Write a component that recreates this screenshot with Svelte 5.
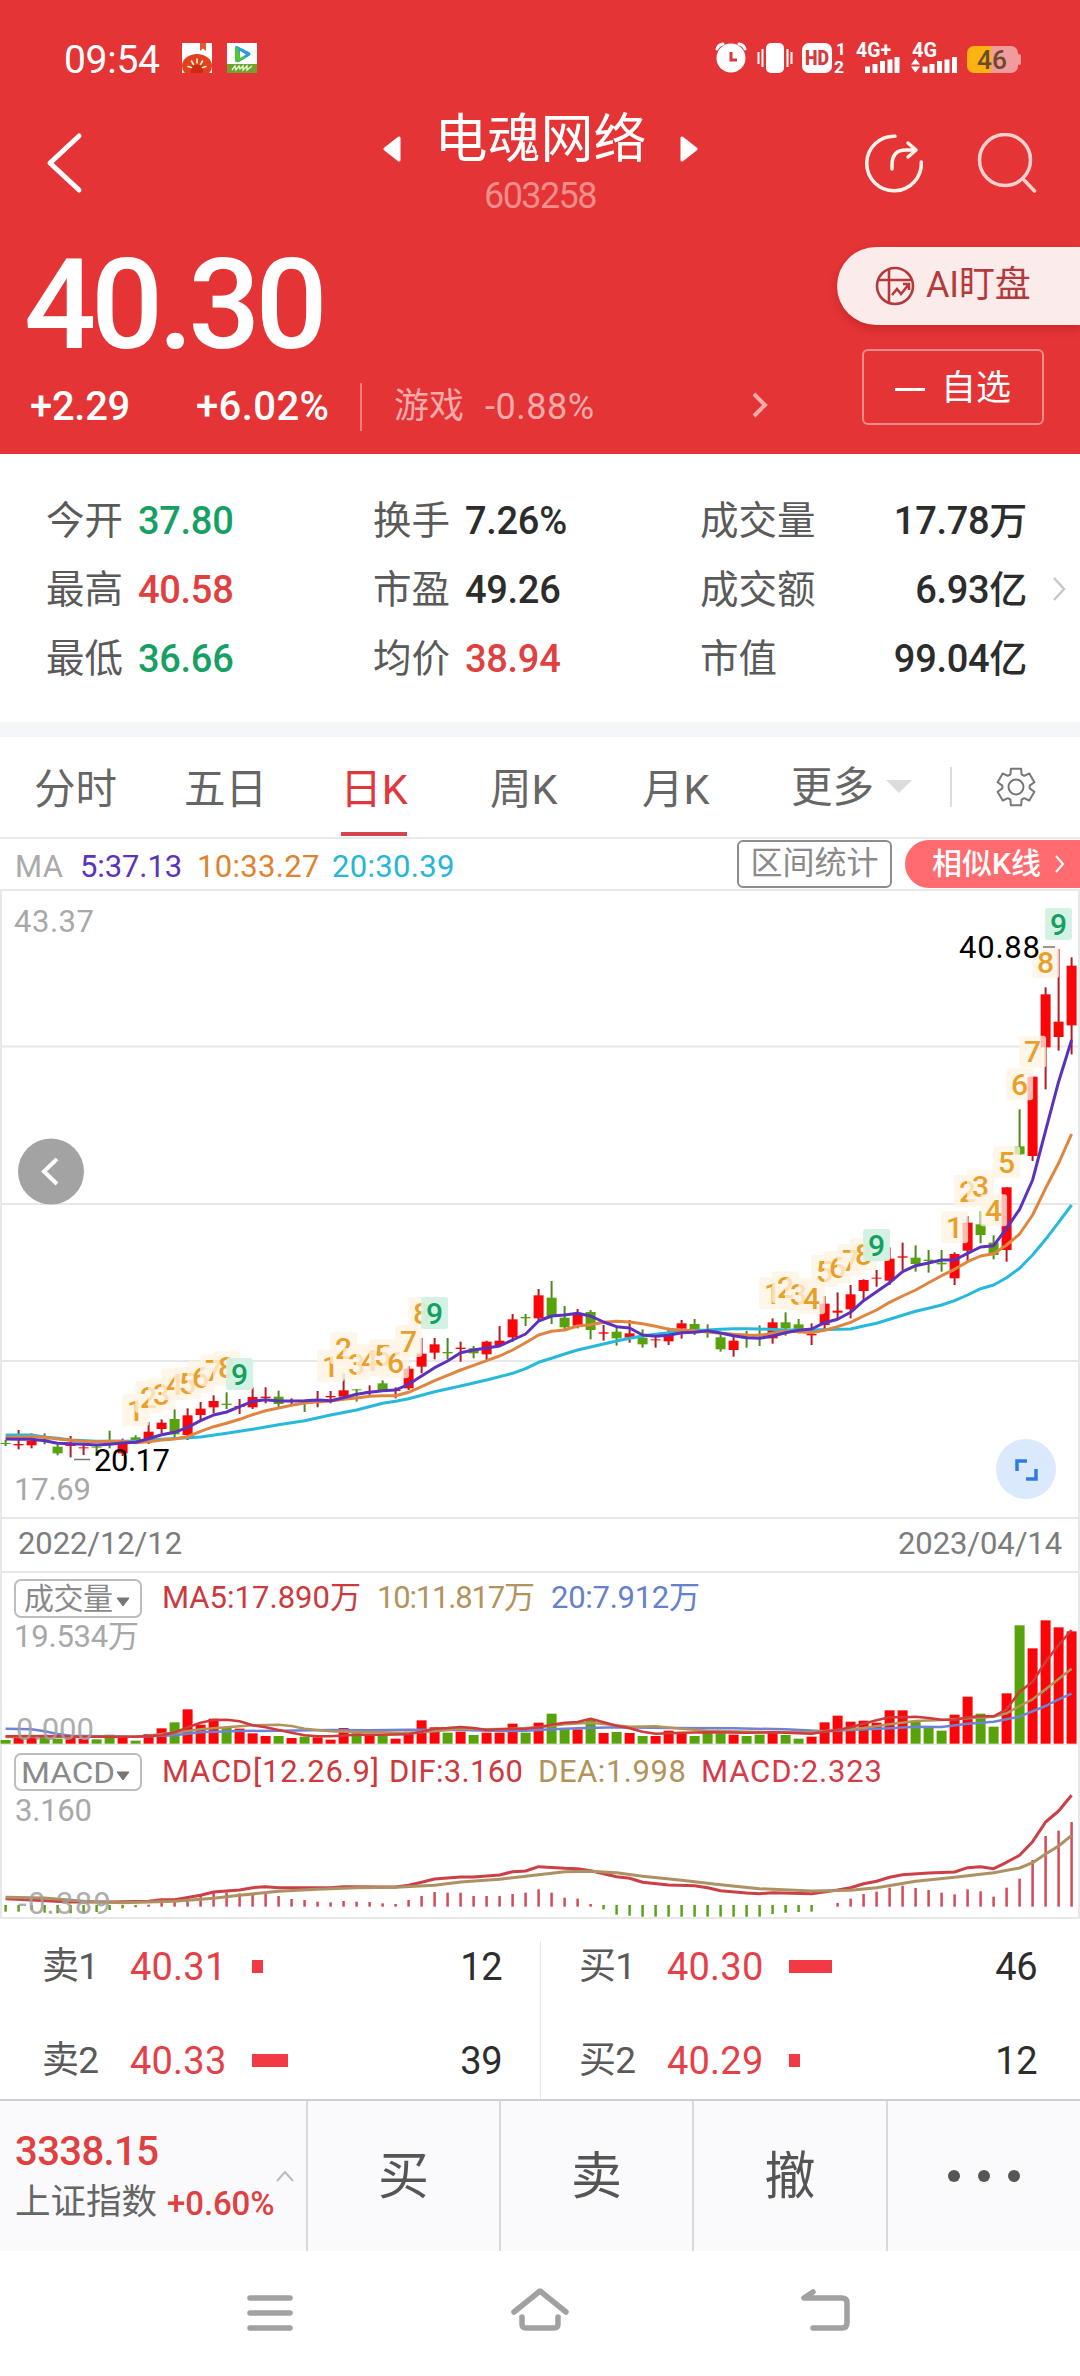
<script>
  const PITCH = 13;
  const FIRST_X = 5.6;
  const x = (i) => FIRST_X + PITCH * i;

  // Candle rows: [colour, high, body top, body bottom, low], in thirds of a pixel.
  const blocks = [
    { base: 933, rows: [
      ['g',720,729,732,738],['r',690,732,736,748],['r',700,722,736,745],['g',700,716,719,733],['g',733,740,760,766],
      ['r',708,734,738,772],['r',735,742,745,765],['g',738,740,742,760],['g',692,728,730,745],['r',716,730,760,768],
      ['g',706,712,724,730],['r',666,695,720,732],['r',658,668,687,700],['g',628,657,703,712],['r',625,646,705,720],
      ['r',606,626,645,665],['r',586,603,622,640],['g',577,611,615,627],['r',597,618,621,642],['r',562,591,622,627],
      ['r',562,590,594,610],['g',572,590,612,622],['r',595,603,605,618],['g',600,603,605,636],['r',573,600,602,622],
      ['r',573,588,592,610],['r',520,571,590,595],['g',567,568,571,605],['r',556,574,576,590],['g',541,550,570,575],
      ['r',562,570,572,595],['r',498,506,565,570],['r',414,461,500,520],['r',414,433,458,478],['g',414,456,460,478],
      ['r',425,443,447,485],['g',438,445,460,475],['r',422,425,463,480],['r',378,422,436,440],['r',342,358,412,425],
      ['g',342,351,355,378],['r',267,286,355,365]
    ]},
    { base: 633, rows: [
      ['g',543,593,648,672],['g',618,653,682,688],['r',627,640,677,685],['g',630,636,690,718],['r',675,697,701,722],
      ['g',680,695,715,737],['r',660,700,713,728],['g',688,713,733,743],['r',710,718,721,743],['r',683,705,724,735],
      ['r',660,670,686,716],['g',657,672,688,705],['g',673,692,695,713],['g',705,712,748,755],['r',710,722,750,770],
      ['g',693,712,714,743],['g',676,712,714,738],['r',655,667,715,731],['g',637,667,685,707],['g',657,673,687,700],
      ['r',670,702,706,735],['r',588,611,675,690]
    ]},
    { base: -27, rows: [
      ['r',1237,1292,1298,1315],['r',1215,1243,1288,1315],['r',1198,1200,1233,1260],['r',1170,1193,1196,1220],['r',1102,1136,1202,1215],
      ['r',1088,1129,1133,1170],['g',1096,1133,1152,1175],['g',1110,1139,1143,1178],['g',1110,1148,1153,1175],['r',1117,1122,1195,1215],
      ['r',1008,1028,1112,1143],['g',993,1033,1065,1090],['g',1066,1088,1125,1138],['r',922,922,1110,1145],['g',688,799,823,825],
      ['r',590,590,828,843],['r',322,343,502,628],['r',207,425,471,512],['r',232,257,436,523]
    ]}
  ];
  const candles = blocks
    .flatMap((b) => b.rows.map(([c, ...v]) => [c, ...v.map((n) => (n + b.base) / 3)]))
    .map(([c, high, top, bottom, low], i) => ({ c, high, top, bottom, low, x: x(i) }));

  const marks = [10, 25, 59, 73].flatMap((start) =>
    Array.from({ length: 9 }, (_, k) => ({ n: k + 1, x: x(start + k), y: candles[start + k].high - 25 }))
  );

  const seq = (start, base, values) => values.map((v, k) => [start + k, v + base]);
  const pairs = (base, flat) => {
    const out = [];
    for (let k = 0; k < flat.length; k += 2) out.push([flat[k], flat[k + 1] + base]);
    return out;
  };
  const line = (pts) => pts.map(([i, v]) => `${x(i).toFixed(1)},${(v / 3).toFixed(1)}`).join(' ');

  const ma5 = line([
    ...seq(0, 933, [717,718,718,722,730,731,733,735,733,729,727,716,704,697,682,662,645,636,620,604,599,603,603,602,600,602,593,583,577,572,570,553,528,503,483,458,450,444,438,420,402,363]),
    ...seq(42, 633, [648,645,640,648,666,680,684,705,709,706,698,697,692,699,707,713,715,708,698,691,687,668]),
    ...seq(64, -27, [1318,1297,1262,1235,1208,1175,1157,1149,1140,1140,1120,1101,1097,1045,988,900,752,605,480])
  ]);
  const ma10 = line([
    ...seq(0, 933, [712,712,710,712,717,721,724,725,724,724,728,725,720,717,710,694,680,670,658,644,632,624,616,609,605,603,598,594,589,587,587,577,560,542,526,510,496,482,468,450,428,405]),
    ...seq(42, 633, [694,690,678,674,667,664,666,671,679,688,690,692,696,700,703,705,706,700,693,695,698,691]),
    ...seq(64, -27, [1340,1327,1308,1290,1267,1248,1230,1208,1187,1168,1145,1128,1121,1095,1062,1005,925,850,762])
  ]);
  const ma20 = line([
    ...pairs(933, [0,705,2,705,3,711,4,715,5,720,7,724,10,724,12,718,14,713,15,711,17,700,19,688,21,674,23,662,25,645,27,630,29,610,30,604,31,596,33,575,35,558,37,540,39,520,40,506,41,487]),
    ...seq(42, 633, [775,762,750,741,732,723,715,708,703,698,694,691,690,688,686,686,687]),
    ...pairs(633, [60,690,62,690]),
    ...seq(64, -27, [1348,1347,1338,1330,1318,1306,1294,1285,1275,1262,1245,1226,1215,1193,1165,1125,1078,1027,975])
  ]);

  const volumeTops = [720,708,706,712,716,712,716,718,704,712,722,702,685,667,628,674,656,684,686,700,708,708,714,710,712,719,684,700,705,708,716,695,661,682,698,695,705,698,698,671,698,668,
    641,686,688,660,699,696,699,708,708,692,696,708,698,700,704,708,704,699,705,716,710,667,647,665,662,668,631,631,664,684,692,644,590,641,680,580,376,445,361,382,394];
  const volumes = volumeTops.map((t, i) => ({ x: x(i), y: (t - 213) / 3, h: (731 - t) / 3, c: candles[i].c }));
  const v5 = line(pairs(-213, [0,709,3,708,6,710,10,710,12,706,13,697,14,682,15,668,16,660,17,659,18,664,19,676,20,682,21,690,22,698,23,706,24,709,25,709,27,704,29,704,31,703,32,695,33,686,34,684,35,681,36,684,37,690,38,688,39,687,40,686,41,682,42,674,43,668,44,666,45,656,46,667,47,677,48,685,49,695,50,701,52,698,54,697,57,698,59,697,61,700,62,701,63,695,64,690,65,682,66,671,67,661,68,652,69,652,70,650,71,654,72,659,73,659,74,652,75,649,76,649,77,628,78,575,79,545,80,485,81,435,82,390]));
  const v10 = line(pairs(-213, [0,711,10,710,13,698,15,688,17,682,19,676,21,674,22,678,23,686,25,694,27,696,29,697,31,699,33,694,35,686,37,688,39,686,41,682,43,673,45,668,46,672,48,680,50,679,52,686,54,692,58,696,62,697,64,690,66,684,68,673,70,663,72,660,74,655,76,650,77,640,78,618,79,598,80,568,81,537,82,506]));
  const v20 = line(pairs(-213, [0,686,2,688,3,694,4,702,5,707,10,710,13,706,15,697,18,693,21,692,25,690,28,691,31,689,35,690,38,693,40,692,42,688,44,685,47,682,51,684,56,685,60,688,63,694,65,690,68,685,70,680,72,681,74,671,76,665,78,650,80,618,81,598,82,581]));

  const dif = line(pairs(-735, [0,1196,2,1200,5,1206,8,1206,11,1204,12,1199,13,1199,15,1186,16,1176,18,1170,19,1163,20,1160,21,1163,25,1163,26,1160,30,1161,31,1156,32,1147,33,1137,35,1131,36,1131,38,1125,39,1115,40,1113,41,1100,43,1105,44,1106,45,1112,47,1130,48,1135,49,1147,51,1155,53,1157,54,1163,55,1172,57,1179,58,1181,59,1178,62,1181,64,1170,65,1163,66,1151,67,1144,68,1132,69,1124,71,1119,73,1116,74,1103,75,1100,76,1106,77,1087,78,1066,79,1025,80,966,81,933,82,886]));
  const dea = line(pairs(-735, [0,1192,3,1194,6,1204,9,1208,11,1206,13,1204,16,1195,18,1186,21,1174,24,1168,27,1163,30,1162,33,1156,35,1146,38,1138,41,1124,43,1115,45,1114,47,1118,49,1129,52,1141,55,1154,58,1166,62,1173,65,1171,67,1163,70,1144,73,1132,76,1118,78,1104,79,1088,80,1062,81,1038,82,1006]));
  const histogram = [1235,1235,1230,1238,1240,1240,1240,1236,1230,1225,1222,1214,1198,1205,1190,1185,1176,1178,1180,1182,1180,1188,1197,1200,1205,1207,1203,1205,1206,1210,1212,1200,1188,1176,1178,1178,1188,1188,1188,1182,1178,1168,1178,1193,1196,1212,
    1228,1244,1247,1250,1250,1250,1250,1250,1250,1250,1250,1250,1250,1242,1238,1236,1235,0,1209,1196,1182,1175,1163,1157,1164,1170,1178,1183,1168,1174,1190,1163,1136,1080,1008,992,966]
    .map((v, i) => ({ v, i }))
    .filter((d) => d.v)
    .map(({ v, i }) => v > 1220
      ? { x: x(i), y1: 160, y2: (v - 735) / 3, c: 'g' }
      : { x: x(i), y1: (v - 735) / 3, y2: 161.7, c: 'r' });

  const stats = [
    ['今开', '37.80', 'down', '换手', '7.26%', '', '成交量', '17.78万'],
    ['最高', '40.58', 'up', '市盈', '49.26', '', '成交额', '6.93亿'],
    ['最低', '36.66', 'down', '均价', '38.94', 'up', '市值', '99.04亿']
  ];
  const tabs = ['分时', '五日', '日K', '周K', '月K'];
  const book = [
    [{ side: '卖1', price: '40.31', bar: 11, qty: 12 }, { side: '卖2', price: '40.33', bar: 36, qty: 39 }],
    [{ side: '买1', price: '40.30', bar: 43, qty: 46 }, { side: '买2', price: '40.29', bar: 11, qty: 12 }]
  ];
  const gear = (() => {
    const pts = [];
    for (let k = 0; k < 6; k++) {
      const a = (k * 60 - 90) * Math.PI / 180;
      for (const [d, r] of [[-0.42, 13.8], [-0.27, 19], [0.27, 19], [0.42, 13.8]])
        pts.push(`${(20 + r * Math.cos(a + d)).toFixed(1)},${(20 + r * Math.sin(a + d)).toFixed(1)}`);
    }
    return pts.join(' ');
  })();
</script>

<main>
  <header>
    <div class="status">
      <span class="time">09:54</span>
      <svg class="app" width="30" height="30" viewBox="0 0 30 30">
        <clipPath id="app"><rect width="30" height="30" rx="5" /></clipPath>
        <g clip-path="url(#app)">
          <rect width="30" height="30" fill="#fff" />
          <path d="M18 0h6v8l-3-2.500l-3 2.500z" fill="#dd5a35" />
          <ellipse cx="15" cy="23" rx="15" ry="12" fill="#e5401c" />
          <path d="M15 22v8" stroke="#c01d0c" stroke-width="12" opacity=".6" />
          <path d="M15 16v4M9.500 18l2 3.500M20.500 18l-2 3.500M6 23.500l3.500 1M24 23.500l-3.500 1" stroke="#fff0dc" stroke-width="1.600" stroke-linecap="round" />
        </g>
      </svg>
      <svg class="app" width="30" height="30" viewBox="0 0 30 30">
        <g clip-path="url(#app)">
          <rect width="30" height="30" fill="#fff" />
          <path d="M8 4q1-2 4 0l10 5q3 2 0 4l-10 6q-4 1-4-2z" fill="#2d9be0" />
          <path d="M8 5q1-2 3 0l3 12l-4 2q-2 0-2-2z" fill="#52c62e" />
          <path d="M8 13l8-1l3 3l-8 4q-3 0-3-3z" fill="#52c62e" opacity=".8" />
          <path d="M13 8l6 3.500l-6 3.500z" fill="#fff" />
          <rect y="21" width="30" height="9" fill="#6ea32e" />
          <path d="M5 27l3-4l1 4l3-4l1 3l3-3v4l4-4v4l5-4" stroke="#eaf4d0" stroke-width="1.400" fill="none" />
        </g>
      </svg>
      <svg class="system" width="308" height="44" viewBox="0 -4 308 44">
        <g fill="none" stroke="#fff" stroke-width="3" stroke-linecap="round">
          <path d="M2 9q1-4 6-5M30 9q-1-4-6-5" />
        </g>
        <circle cx="16" cy="18" r="14.500" fill="#fff" />
        <path d="M16 12v8h6" fill="none" stroke="#d8393a" stroke-width="3" />
        <rect x="51" y="3" width="18" height="30" rx="5" fill="#fff" />
        <path d="M43.500 12v12M47.500 9v18M72.500 9v18M76.500 12v12" stroke="#fff" stroke-width="2" />
        <rect x="87" y="3" width="30" height="30" rx="7" fill="#fff" />
        <text x="90" y="25" class="hd" textLength="24" lengthAdjust="spacingAndGlyphs">HD</text>
        <text x="121" y="15" class="tiny">1</text>
        <text x="119" y="33" class="tiny" textLength="10" lengthAdjust="spacingAndGlyphs">2</text>
        <text x="141" y="17" class="net" textLength="35" lengthAdjust="spacingAndGlyphs">4G+</text>
        <path d="M152.500 26.500v6.500M160 24v9M167.500 21v12M175 19.500v13.500M182 17v16" stroke="#fff" stroke-width="5" />
        <text x="197" y="17" class="net" textLength="25" lengthAdjust="spacingAndGlyphs">4G</text>
        <path d="M196 24.500l4.500-6l4.500 6zM196 26.500l4.500 6l4.500-6z" fill="#fff" />
        <path d="M210 26.500v6.500M217 24v9M224.500 21v12M232 19.500v13.500M239.500 17v16" stroke="#fff" stroke-width="5" />
        <clipPath id="cell"><rect x="252" y="6" width="51" height="27" rx="7" /></clipPath>
        <g clip-path="url(#cell)">
          <rect x="252" y="6" width="24" height="27" fill="#fdb30f" />
          <rect x="276" y="6" width="28" height="27" fill="#f19b9c" />
        </g>
        <rect x="302" y="14" width="4" height="11" rx="2" fill="#f19b9c" />
        <text x="262" y="29" class="charge" textLength="30" lengthAdjust="spacingAndGlyphs">46</text>
      </svg>
    </div>

    <div class="titlebar">
      <svg class="back" width="40" height="64" viewBox="0 0 40 64"><path d="M34 5L5 32L34 59" fill="none" stroke="#fff" stroke-width="5" stroke-linecap="round" stroke-linejoin="round" /></svg>
      <div class="title">
        <div class="name">
          <svg width="18" height="28" viewBox="0 0 18 28"><path d="M16 3v22L2 14z" fill="#fff" stroke="#fff" stroke-width="3" stroke-linejoin="round" /></svg>
          <h1>电魂网络</h1>
          <svg width="18" height="28" viewBox="0 0 18 28"><path d="M2 3v22L16 14z" fill="#fff" stroke="#fff" stroke-width="3" stroke-linejoin="round" /></svg>
        </div>
        <span class="code">603258</span>
      </div>
      <div class="tools">
        <svg width="60" height="60" viewBox="0 0 60 60" fill="none" stroke="#fff4ea" stroke-width="3.500" stroke-linecap="round" stroke-linejoin="round">
          <path d="M31 3.200A27.300 27.300 0 1 0 57.300 29" />
          <path d="M28 36v-4Q28 17 42 17H52M44 10l8 7l-8 7" />
        </svg>
        <svg width="60" height="60" viewBox="0 0 60 60" fill="none" stroke="#ffd0ce" stroke-width="3.500" stroke-linecap="round">
          <circle cx="28" cy="27" r="25.500" /><path d="M47.500 47.500l10 10.500" />
        </svg>
      </div>
    </div>

    <div class="quote">
      <div class="figures">
        <div class="price">40.30</div>
        <div class="change">
          <b class="diff">+2.29</b><b class="rate">+6.02%</b>
          <span class="sector">游戏</span><span class="sector-rate">-0.88%</span>
          <svg class="go" width="18" height="30" viewBox="0 0 18 30"><path d="M3 3l11 11L3 25" fill="none" stroke="#f9aaaa" stroke-width="4" /></svg>
        </div>
      </div>
      <div class="actions">
        <div class="ai">
          <svg width="40" height="40" viewBox="0 0 40 40" fill="none" stroke="#b43a3c" stroke-width="2.600">
            <circle cx="20" cy="20" r="18" /><path d="M14 3v34M3 14h34M17 29l5-6l4 5l8-10M28 18h6v6" />
          </svg>
          <span>AI盯盘</span>
        </div>
        <div class="watch"><i></i><span>自选</span></div>
      </div>
    </div>
  </header>

  <section class="stats">
    <div class="table">
      {#each stats as [l1, v1, c1, l2, v2, c2, l3, v3]}
        <div class="row">
          <span class="lab">{l1}</span><b class={c1}>{v1}</b>
          <span class="lab">{l2}</span><b class={c2}>{v2}</b>
          <span class="lab">{l3}</span><b class="end">{v3}</b>
        </div>
      {/each}
    </div>
    <svg width="18" height="30" viewBox="0 0 18 30"><path d="M4 4l10 11L4 26" fill="none" stroke="#c8c8c8" stroke-width="2.500" /></svg>
  </section>

  <nav class="tabs">
    {#each tabs as t}
      <div class="tab" class:active={t === '日K'}>{t}</div>
    {/each}
    <div class="more">更多<svg width="26" height="14" viewBox="0 0 26 14"><path d="M0 0h26L13 13z" fill="#dcdcdc" /></svg></div>
    <div class="settings">
      <svg width="40" height="40" viewBox="0 0 40 40" fill="none" stroke="#777" stroke-width="2" stroke-linejoin="round"><polygon points={gear} /><circle cx="20" cy="20" r="7.500" /></svg>
    </div>
  </nav>

  <section class="indicator">
    <span class="ma">MA</span><span class="c5">5:37.13</span><span class="c10">10:33.27</span><span class="c20">20:30.39</span>
    <span class="range">区间统计</span>
    <span class="similar">相似K线<svg width="12" height="22" viewBox="0 0 12 22"><path d="M2 3l7 8l-7 8" fill="none" stroke="#fff" stroke-width="2" /></svg></span>
  </section>

  <section class="panel">
    <svg width="1080" height="628" viewBox="0 0 1080 628">
      <path class="grid" d="M0 1H1080M0 157.500H1080M0 315H1080M0 472H1080M1 0V628M1079 0V628" />
      <text class="axis" x="14" y="43" textLength="80">43.37</text>
      <text class="axis" x="14" y="611" textLength="77">17.69</text>
      {#each candles as k}
        <line x1={k.x} x2={k.x} y1={k.high} y2={k.low} class="wick {k.c}" />
        <rect x={k.x - 5} y={k.top} width="10" height={Math.max(1, k.bottom - k.top)} class="body {k.c}" />
      {/each}
      <polyline points={ma20} class="curve" stroke="#27b9da" />
      <polyline points={ma10} class="curve" stroke="#e08540" />
      <polyline points={ma5} class="curve" stroke="#5b32bd" />
      {#each marks as m}
        <rect x={m.x - 13.5} y={m.y - 16} width="27" height="32" rx="3" class={m.n === 9 ? 'tag nine' : 'tag'} />
        <text x={m.x} y={m.y + 10.500} class={m.n === 9 ? 'mark nine' : 'mark'}>{m.n}</text>
      {/each}
      <path d="M74 570.500H90M1043 58H1055" stroke="#777" stroke-width="1.500" />
      <text class="extreme" x="94" y="582" textLength="76">20.17</text>
      <text class="extreme" x="959" y="69" textLength="81">40.88</text>
      <circle cx="51" cy="282.500" r="33" fill="#a3a3a3" />
      <path d="M57 270L44 282.500L57 295" fill="none" stroke="#fff" stroke-width="4" />
      <circle cx="1026" cy="580" r="30" fill="#dbe9fd" />
      <path d="M1027 572h-10v10M1026 590h10v-10" fill="none" stroke="#2f7be6" stroke-width="3.500" />
    </svg>
  </section>

  <div class="dates"><span>2022/12/12</span><span>2023/04/14</span></div>

  <section class="panel">
    <svg width="1080" height="174" viewBox="0 0 1080 174">
      <path class="grid" d="M0 1H1080M1 0V174M1079 0V174M0 173.500H1080" />
      <rect x="15" y="9" width="126" height="37" rx="6" fill="none" stroke="#bdbdbd" stroke-width="2" />
      <text class="pick" x="24" y="38" textLength="89">成交量</text>
      <path d="M117 27h12l-6 8z" fill="#777" stroke="#777" />
      <text class="cap" x="162" y="37" textLength="199" fill="#cc3a40">MA5:17.890万</text>
      <text class="cap" x="377" y="37" textLength="158" fill="#b3935c">10:11.817万</text>
      <text class="cap" x="551" y="37" textLength="149" fill="#6580cf">20:7.912万</text>
      <text class="axis" x="14" y="76" textLength="125">19.534万</text>
      {#each volumes as v}
        <rect x={v.x - 5} y={v.y} width="10" height={v.h} class="body {v.c}" />
      {/each}
      <polyline points={v20} class="thin" stroke="#6f83d6" />
      <polyline points={v10} class="thin" stroke="#b3935c" />
      <polyline points={v5} class="thin" stroke="#cf3a3a" />
      <text class="axis over" x="16" y="169" textLength="78">0.000</text>
    </svg>
  </section>

  <section class="panel">
    <svg width="1080" height="174" viewBox="0 0 1080 174">
      <path class="grid" d="M0 173H1080M1 0V174M1079 0V174" />
      <rect x="15" y="9" width="126" height="36" rx="6" fill="none" stroke="#bdbdbd" stroke-width="2" />
      <text class="pick" x="21" y="38" textLength="94" lengthAdjust="spacingAndGlyphs">MACD</text>
      <path d="M117 27h12l-6 8z" fill="#777" stroke="#777" />
      <text class="cap" x="162" y="37" textLength="217" fill="#cc3a40">MACD[12.26.9]</text>
      <text class="cap" x="389" y="37" textLength="134" fill="#cc3a40">DIF:3.160</text>
      <text class="cap" x="538" y="37" textLength="148" fill="#b3935c">DEA:1.998</text>
      <text class="cap" x="701" y="37" textLength="181" fill="#d63b4a">MACD:2.323</text>
      <text class="axis" x="15" y="76" textLength="77">3.160</text>
      {#each histogram as h}
        <line x1={h.x} x2={h.x} y1={h.y1} y2={h.y2} class="hist {h.c}" />
      {/each}
      <polyline points={dif} class="curve" stroke="#cc3f46" />
      <polyline points={dea} class="curve" stroke="#ad9163" />
      <text class="axis over" x="18" y="169" textLength="93">-0.389</text>
    </svg>
  </section>

  <section class="book">
    {#each book as side}
      <div class="side">
        {#each side as o}
          <div class="order">
            <span class="lab">{o.side}</span><span class="p">{o.price}</span>
            <i style="width: {o.bar}px"></i><span class="q">{o.qty}</span>
          </div>
        {/each}
      </div>
    {/each}
  </section>

  <footer>
    <div class="index">
      <b>3338.15</b>
      <div><span>上证指数</span><em>+0.60%</em></div>
      <svg width="20" height="14" viewBox="0 0 20 14"><path d="M2 12l8-9l8 9" fill="none" stroke="#bbb" stroke-width="2" /></svg>
    </div>
    <div class="act">买</div>
    <div class="act">卖</div>
    <div class="act">撤</div>
    <div class="act dots"><i></i><i></i><i></i></div>
  </footer>

  <div class="keys">
    <svg width="1080" height="126" viewBox="0 0 1080 126" fill="none" stroke="#a1a1a1" stroke-width="5.500" stroke-linecap="round" stroke-linejoin="round">
      <path d="M250 47H290M250 62H290M250 77H290" />
      <path d="M514 61L540 40L566 61M522 66V73Q522 77 526 77H554Q558 77 558 73V66" />
      <path d="M813 41L804 47H842Q847 47 847 52V72Q847 77 842 77H813" />
    </svg>
  </div>
</main>

<style>
  :global(body) { margin: 0; background: #fff; }
  main { width: 1080px; height: 2376px; overflow: hidden; background: #fff; color: #5a5a5a; font-family: Roboto, 'Noto Sans CJK SC', sans-serif; }
  svg { display: block; flex: none; }
  b { font-weight: 500; }
  header { height: 454px; background: #e43436; color: #fff; }

  .status { height: 110px; padding: 5px 58px 0 64px; box-sizing: border-box; display: flex; align-items: center; }
  .time { width: 118px; font-size: 39px; line-height: 46px; letter-spacing: -.3px; padding-top: 5px; box-sizing: border-box; }
  .app { margin-right: 15px; }
  .system { margin: 0 -1px 0 auto; }
  .hd { font-size: 20px; font-weight: 900; fill: #d8393a; }
  .tiny { font-size: 17px; font-weight: 700; fill: #fff; }
  .net { font-size: 20px; font-weight: 700; fill: #fff; }
  .charge { font-size: 25px; font-weight: 500; fill: #6b4a2a; }

  .titlebar { height: 104px; display: grid; grid-template-columns: 300px 1fr 300px; align-items: center; }
  .back { margin: -2px 0 0 45px; }
  .title { display: flex; flex-direction: column; align-items: center; gap: 5px; margin-top: 0; }
  .name { display: flex; align-items: center; gap: 33px; }
  .name svg { margin-top: 17px; }
  .name svg:first-child { margin-right: 1px; }
  h1 { margin: 0; font-size: 53px; font-weight: 400; line-height: 60px; }
  .code { font-size: 36px; line-height: 42px; letter-spacing: -1.600px; color: #f28d8c; }
  .tools { display: flex; gap: 53px; margin: -2px 0 0 84px; }

  .quote { display: flex; justify-content: space-between; height: 240px; }
  .figures { padding: 36px 0 0 24px; }
  .price { font-size: 127px; line-height: 110px; font-weight: 500; letter-spacing: -5.100px; }
  .change { display: flex; align-items: center; height: 48px; margin-top: 23px; font-size: 40px; line-height: 48px; }
  .diff { width: 166px; margin-left: 6px; letter-spacing: -.3px; }
  .rate { width: 164px; border-right: 2px solid #ef7b7b; letter-spacing: .4px; }
  .sector { margin-left: 32px; font-size: 35px; color: #f9aaaa; }
  .sector-rate { margin-left: 21px; width: 266px; font-size: 36px; letter-spacing: .5px; color: #f9aaaa; }
  .go { margin-top: -2px; }
  .actions { padding-top: 33px; display: flex; flex-direction: column; align-items: flex-end; gap: 24px; }
  .ai { width: 243px; height: 78px; padding-left: 38px; box-sizing: border-box; border-radius: 39px 0 0 39px; background: #fbebea; color: #b43a3c; display: flex; align-items: center; gap: 11px; font-size: 36px; line-height: 44px; letter-spacing: -.2px; box-shadow: 0 4px 10px rgba(130, 0, 0, .25); }
  .ai span { padding-bottom: 2px; }
  .watch { width: 182px; height: 76px; margin-right: 36px; box-sizing: border-box; border: 2px solid #f28a8a; border-radius: 6px; display: flex; align-items: center; justify-content: center; gap: 16px; font-size: 35px; line-height: 44px; }
  .watch span { padding-top: 3px; }
  .watch i { width: 30px; height: 3px; background: #fff; margin-top: 5px; }

  .stats { height: 268px; padding: 32px 0 0 46px; box-sizing: border-box; display: flex; }
  .stats > svg { margin: 88px 0 0 23px; }
  .table { width: 981px; }
  .row { height: 69px; display: grid; grid-template-columns: 92px 235px 92px 235px 116px 1fr; align-items: center; font-size: 38.500px; line-height: 50px; }
  .row b { color: #2c2c2c; font-size: 38px; letter-spacing: -.3px; }
  .row .end { text-align: right; }
  .row .up { color: #e04040; }
  .row .down { color: #16a064; }

  .tabs { height: 117px; border-top: 15px solid #f5f6f9; border-bottom: 2px solid #e9e9e9; box-sizing: border-box; display: flex; font-size: 41.500px; line-height: 105px; color: #666; white-space: nowrap; }
  .tab { margin-left: 34px; width: 116px; }
  .tab:nth-child(2) { width: 123px; }
  .tab:nth-child(3) { width: 66px; margin-right: 49px; }
  .tab:nth-child(4) { width: 118px; }
  .tab:nth-child(5) { width: 116px; }
  .tab.active { color: #e0363c; box-shadow: inset 0 -4px #d5444e; height: 99px; display: flex; justify-content: center; }
  .more { display: flex; align-items: center; gap: 12px; margin-left: 33px; width: 126px; }
  .settings { border-left: 2px solid #ddd; height: 40px; margin: 30px 0 0 33px; padding-left: 44px; }

  .indicator { height: 50px; display: flex; align-items: center; font-size: 31px; padding-left: 15px; color: #aaa; line-height: 40px; }
  .indicator > span:not(.range):not(.similar) { padding-top: 5px; letter-spacing: .3px; }
  .ma { width: 65px; }
  .indicator > .c5:not(.range):not(.similar) { width: 117px; color: #5a34ba; letter-spacing: -.1px; }
  .c10 { width: 135px; color: #e0822e; }
  .c20 { color: #25b6d8; width: 405px; }
  .range { width: 155px; height: 48px; box-sizing: border-box; border: 2px solid #8c8c8c; border-radius: 6px; text-align: center; line-height: 43px; font-size: 32px; color: #8a8a8a; }
  .similar { margin-left: 13px; flex: 1; height: 48px; padding: 0 0 1px 27px; box-sizing: border-box; display: flex; align-items: center; gap: 13px; border-radius: 24px 0 0 24px; background: #ff6b6e; color: #fff; font-size: 30px; font-weight: 500; letter-spacing: 0; }

  .grid { stroke: #e8e8e8; stroke-width: 2; fill: none; }
  .axis { font-size: 31px; fill: #a8a8a8; }
  .over { fill: #a0a0a0; opacity: .85; }
  .cap { font-size: 31px; }
  .pick { font-size: 30px; fill: #8a8a8a; }
  .extreme { font-size: 31px; fill: #000; }
  .wick { stroke-width: 2; }
  .wick.r { stroke: #b51a22; }
  .wick.g { stroke: #4d8a1c; }
  .body.r { fill: #fb0509; }
  .body.g { fill: #58a30c; }
  .curve { fill: none; stroke-width: 3; stroke-linejoin: round; }
  .thin { fill: none; stroke-width: 2.500; stroke-linejoin: round; }
  .hist { stroke-width: 2.500; }
  .hist.r { stroke: #d64a58; }
  .hist.g { stroke: #5ca11b; }
  .tag { fill: #fff3e3; fill-opacity: .76; }
  .tag.nine { fill: #d2f1e1; fill-opacity: .95; }
  .mark { font-size: 30px; text-anchor: middle; fill: #e8a02c; font-weight: 500; }
  .mark.nine { fill: #14a061; }

  .dates { height: 54px; padding: 0 16px; box-sizing: border-box; border: 2px solid #e8e8e8; border-bottom: 0; display: flex; justify-content: space-between; align-items: center; font-size: 31px; line-height: 40px; letter-spacing: -.1px; color: #7c7c7c; }
  .dates span { padding-bottom: 3px; }

  .book { height: 180px; display: flex; }
  .side { width: 540px; height: 158px; margin-top: 22px; box-sizing: border-box; padding-left: 42px; }
  .side + .side { border-left: 1px solid #e6e6e6; padding-left: 38px; }
  .order { height: 94px; margin-top: -21px; margin-bottom: 21px; display: flex; align-items: center; font-size: 38px; line-height: 50px; }
  .order + .order { margin-top: -21px; }
  .order .lab { width: 88px; font-size: 37px; letter-spacing: -.8px; padding-bottom: 1px; }
  .order .p { width: 122px; color: #e63f47; letter-spacing: .2px; }
  .order i { height: 13px; background: #f23a44; margin-top: -2px; }
  .order .q { margin-left: auto; padding-right: 43px; color: #2d2d2d; letter-spacing: -.5px; }
  .side:first-child .q { padding-right: 38px; }

  footer { height: 152px; box-sizing: border-box; border-top: 2px solid #ccced0; background: #fafafc; display: grid; grid-template-columns: 308px 193px 193px 194px 1fr; }
  .index { padding: 28px 0 0 15px; box-sizing: border-box; color: #666; border-right: 2px solid #d8d9db; display: grid; grid-template-columns: 260px 1fr; grid-template-rows: 48px 56px; }
  .index b { font-size: 40px; line-height: 46px; letter-spacing: -.6px; color: #e04040; }
  .index div { grid-row: 2; grid-column: 1; display: flex; align-items: center; font-size: 35.500px; line-height: 44px; white-space: nowrap; }
  .index span { padding-bottom: 6px; }
  .index em { font-style: normal; font-size: 33px; font-weight: 500; color: #e04040; margin-left: 10px; letter-spacing: -.1px; padding-bottom: 2px; }
  .index svg { grid-row: 1 / 3; grid-column: 2; margin-top: 40px; }
  .act { display: flex; align-items: center; justify-content: center; padding-top: 2px; font-size: 51px; line-height: 60px; color: #555; border-right: 2px solid #d8d9db; }
  .dots { gap: 18px; border-right: 0; padding-top: 0; }
  .dots i { width: 12px; height: 12px; border-radius: 50%; background: #555; }
</style>
